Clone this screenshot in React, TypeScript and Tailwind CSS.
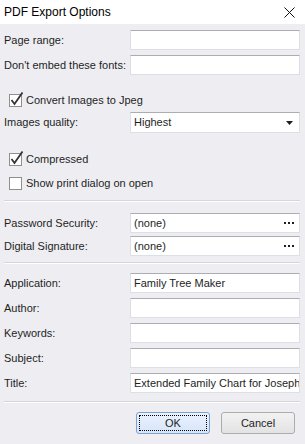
import React from 'react';

const font = { fontFamily: '"Liberation Sans", Arial, sans-serif' };

const TextRow: React.FC<{ label: string; value?: string; className?: string }> = ({ label, value = '', className = '' }) => (
  <div className={`flex items-center h-[20px] ${className}`}>
    <div className="w-[126px] shrink-0 text-[11px] text-[#1e1e1e] whitespace-nowrap">{label}</div>
    <div className="w-[170px] h-[20px] bg-white border border-[#dbdfe6] border-t-[#abadb3] flex items-center px-[3px] overflow-hidden">
      <span className="text-[11px] text-[#1e1e1e] whitespace-nowrap">{value}</span>
    </div>
  </div>
);

const EllipsisRow: React.FC<{ label: string; className?: string }> = ({ label, className = '' }) => (
  <div className={`flex items-center h-[20px] ${className}`}>
    <div className="w-[126px] shrink-0 text-[11px] text-[#1e1e1e]">{label}</div>
    <div className="w-[170px] h-[20px] bg-white border border-[#dbdfe6] border-t-[#abadb3] flex items-center justify-between pl-[3px] pr-[5px]">
      <span className="text-[11px] text-[#1e1e1e]">(none)</span>
      <span className="flex gap-[2px]">
        <span className="w-[2px] h-[2px] bg-[#1e1e1e]" />
        <span className="w-[2px] h-[2px] bg-[#1e1e1e]" />
        <span className="w-[2px] h-[2px] bg-[#1e1e1e]" />
      </span>
    </div>
  </div>
);

const Check: React.FC<{ label: string; checked?: boolean; className?: string }> = ({ label, checked = false, className = '' }) => (
  <div className={`flex items-center h-[18px] pl-[5px] ${className}`}>
    <div className="relative w-[13px] h-[13px] bg-white border border-[#8f8f8f]">
      {checked && (
        <svg className="absolute left-[-1px] top-[-4px]" width="16" height="16" viewBox="0 0 16 16">
          <path d="M2.5 9 L5.5 13 L13.5 1.5" fill="none" stroke="#333" strokeWidth="1.8" />
        </svg>
      )}
    </div>
    <span className="ml-[4px] text-[11px] text-[#1e1e1e]">{label}</span>
  </div>
);

const Separator: React.FC<{ className?: string }> = ({ className = '' }) => (
  <div className={`h-[2px] border-t border-[#d5d5da] border-b-white border-b ${className}`} />
);

export default function App() {
  return (
    <div className="w-[305px] h-[444px] bg-[#eeeef2] flex flex-col" style={font}>
      <div className="h-[24px] bg-white flex items-center justify-between pl-[4px] pr-[10px]">
        <span className="text-[12px] text-black">PDF Export Options</span>
        <svg width="11" height="11" viewBox="0 0 11 11">
          <path d="M0.5 0.5 L10.5 10.5 M10.5 0.5 L0.5 10.5" stroke="#111" strokeWidth="1" />
        </svg>
      </div>
      <div className="flex flex-col pl-[4px] pr-[5px]">
        <TextRow label="Page range:" className="mt-[6px]" />
        <TextRow label="Don't embed these fonts:" className="mt-[5px]" />
        <Check label="Convert Images to Jpeg" checked className="mt-[16px]" />
        <div className="flex items-center h-[21px] mt-[3px]">
          <div className="w-[126px] shrink-0 text-[11px] text-[#1e1e1e]">Images quality:</div>
          <div className="w-[170px] h-[21px] bg-white border border-[#dbdfe6] border-t-[#abadb3] flex items-center justify-between pl-[3px] pr-[6px]">
            <span className="text-[11px] text-[#1e1e1e]">Highest</span>
            <svg width="7" height="4" viewBox="0 0 7 4">
              <path d="M0 0 H7 L3.5 4 Z" fill="#1e1e1e" />
            </svg>
          </div>
        </div>
        <Check label="Compressed" checked className="mt-[17px]" />
        <Check label="Show print dialog on open" className="mt-[6px]" />
        <Separator className="mt-[8px]" />
        <EllipsisRow label="Password Security:" className="mt-[11px]" />
        <EllipsisRow label="Digital Signature:" className="mt-[3px]" />
        <Separator className="mt-[6px]" />
        <TextRow label="Application:" value="Family Tree Maker" className="mt-[9px]" />
        <TextRow label="Author:" className="mt-[5px]" />
        <TextRow label="Keywords:" className="mt-[5px]" />
        <TextRow label="Subject:" className="mt-[5px]" />
        <TextRow label="Title:" value="Extended Family Chart for  Joseph" className="mt-[5px]" />
        <Separator className="mt-[8px]" />
        <div className="flex justify-end gap-[11px] mt-[9px] pr-[5px]">
          <button className="w-[74px] h-[22px] rounded-[3px] border border-[#7da2ce] bg-gradient-to-b from-[#eaf2fd] to-[#d7e5fa] p-[2px]">
            <div className="w-full h-full border border-dotted border-black flex items-center justify-center text-[11px] text-[#1e1e1e]">OK</div>
          </button>
          <button className="w-[74px] h-[22px] rounded-[3px] border border-[#acacac] bg-gradient-to-b from-[#f2f2f2] to-[#e3e3e3] flex items-center justify-center text-[11px] text-[#1e1e1e]">
            Cancel
          </button>
        </div>
      </div>
    </div>
  );
}
